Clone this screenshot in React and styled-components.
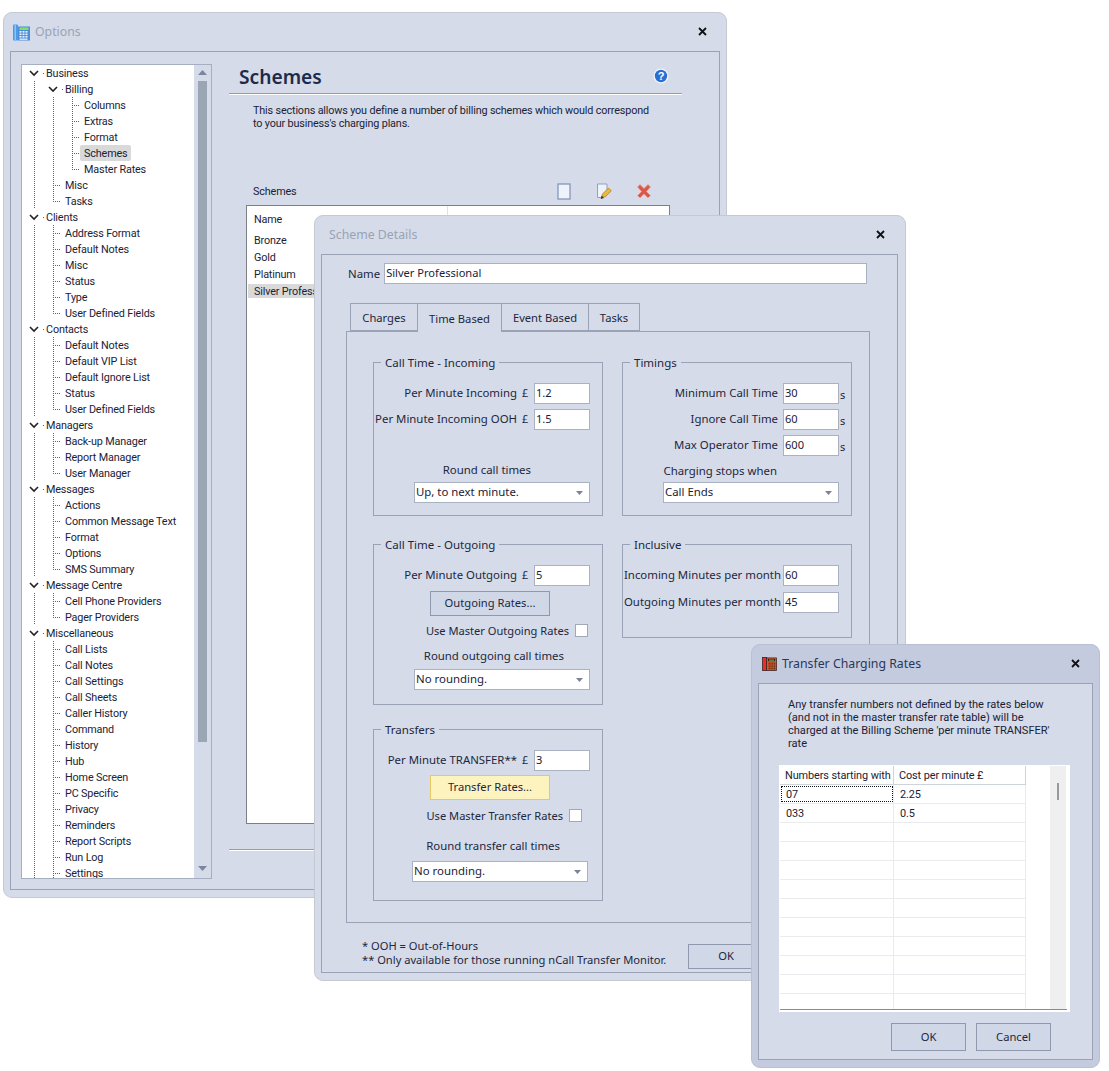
import React from "react";
import styled, { createGlobalStyle } from "styled-components";

const UI = `"Noto Sans", "Open Sans", "Liberation Sans", sans-serif`;
const TREEFONT = `Roboto, "Liberation Sans", sans-serif`;
const INK = "#1d2740";
const FACE = "#d5dbe8";
const LINE = "#9aa3b5";

const Global = createGlobalStyle`
  html, body { margin: 0; padding: 0; background: #fff; }
  body { font-family: ${UI}; color: ${INK}; width: 1109px; height: 1071px; overflow: hidden; }
`;

const Desktop = styled.div`
  position: relative;
  width: 1109px;
  height: 1071px;
  overflow: hidden;
`;

const Win = styled.section`
  position: absolute;
  left: ${(p) => p.$x}px;
  top: ${(p) => p.$y}px;
  width: ${(p) => p.$w}px;
  height: ${(p) => p.$h}px;
  box-sizing: border-box;
  display: flex;
  flex-direction: column;
  padding: 0 ${(p) => p.$padR ?? 6}px 7px 6px;
  background: ${(p) => (p.$active ? "#c4cbdf" : FACE)};
  border: 1px solid ${(p) => (p.$active ? "#b9c0d4" : "#c5c9d2")};
  border-radius: 9px;
`;

const TitleBar = styled.header`
  flex: none;
  box-sizing: border-box;
  height: 38px;
  display: flex;
  align-items: center;
  gap: 5px;
  padding: 0 13px 2px ${(p) => p.$pl}px;
`;

const Title = styled.h1`
  margin: 0;
  font-size: 12.3px;
  font-weight: 400;
  color: ${(p) => (p.$active ? "#2b3759" : "#9aa3b5")};
`;

const TitleIcon = styled.svg`
  flex: none;
  margin-top: 2px;
`;

const CloseBtn = styled.svg`
  width: 9px;
  height: 9px;
  margin-left: auto;
`;

const Frame = styled.div`
  flex: 1;
  min-height: 0;
  box-sizing: border-box;
  border: 1px solid ${LINE};
  background: ${FACE};
`;

const OptionsBody = styled(Frame)`
  display: flex;
  padding: 12px 0 10px 10px;
`;

/* Tree */
const Tree = styled.nav`
  flex: none;
  box-sizing: border-box;
  width: 191px;
  height: 815px;
  display: flex;
  border: 1px solid #a6afc1;
  font-family: ${TREEFONT};
  font-size: 10.8px;
  letter-spacing: -0.15px;
  overflow: hidden;
`;

const TreeList = styled.div`
  flex: none;
  width: 172px;
  height: 100%;
  background: #fff;
  overflow: hidden;
`;

const TreeRow = styled.div`
  display: flex;
  align-items: center;
  height: 16px;
  padding-left: 12px;
  white-space: nowrap;
  color: #1a2236;
`;

const DOTS_V = "repeating-linear-gradient(to bottom, #5b5f68 0 1px, transparent 1px 2px)";
const DOTS_H = "repeating-linear-gradient(to right, #5b5f68 0 1px, transparent 1px 2px)";

const Guide = styled.span`
  flex: none;
  width: ${(p) => p.$w}px;
  height: 16px;
  background-image: ${DOTS_V}${(p) => (p.$tick ? `, ${DOTS_H}` : "")};
  background-repeat: no-repeat;
  background-position: 0 0${(p) => (p.$tick ? ", 0 8px" : "")};
  background-size: 1px ${(p) => (p.$last ? "9px" : "16px")}${(p) => (p.$tick ? ", 8px 1px" : "")};
`;

const Expander = styled.span`
  flex: none;
  width: 12px;
  display: flex;
  align-items: center;
  height: 16px;
`;

const Chevron = styled.svg`
  flex: none;
  width: 10px;
  height: 7px;
  margin-left: -5px;
`;

const Dot = styled.span`
  flex: none;
  width: 1px;
  height: 1px;
  margin-left: 4px;
  background: #5b5f68;
`;

const TreeLabel = styled.span`
  box-sizing: border-box;
  height: 16px;
  line-height: 17px;
  padding: 0 4px;
  margin-left: -4px;
  border-radius: 2px;
  background: ${(p) => (p.$selected ? "#d9d9d9" : "transparent")};
`;

const VScroll = styled.div`
  flex: none;
  width: 17px;
  display: flex;
  flex-direction: column;
  align-items: center;
  background: ${FACE};
`;

const ScrollArrow = styled.svg`
  flex: none;
  width: 9px;
  height: 5px;
  margin-top: ${(p) => p.$mt}px;
`;

const ScrollThumb = styled.div`
  flex: none;
  width: 9px;
  height: 661px;
  margin-top: 6px;
  background: #9ba6b5;
`;

/* Right pane */
const Pane = styled.div`
  flex: none;
  width: 453px;
  margin-left: 17px;
  display: flex;
  flex-direction: column;
`;

const HeadingRow = styled.div`
  box-sizing: border-box;
  height: 29px;
  display: flex;
  align-items: center;
  justify-content: space-between;
  padding: 0 13px 4px 10px;
`;

const Heading = styled.h2`
  margin: 0;
  font-size: 19.2px;
  line-height: 26px;
  font-weight: 600;
  color: #1d2b4a;
`;

const HelpGlyph = styled.svg`
  flex: none;
  margin-top: -2px;
`;

const Rule = styled.hr`
  flex: none;
  width: 100%;
  height: 0;
  margin: ${(p) => p.$mt ?? 0}px 0 0;
  border: 0;
  border-top: 1px solid #9c9c9c;
  border-bottom: 1px solid #fff;
`;

const Intro = styled.p`
  margin: 9px 0 0 24px;
  width: 405px;
  font-family: ${TREEFONT};
  font-size: 10.8px;
  letter-spacing: -0.15px;
  line-height: 13px;
  color: #1a2236;
`;

const ListToolbar = styled.div`
  margin: 51px 0 0 24px;
  width: 399px;
  height: 20px;
  display: flex;
  align-items: center;
  font-family: ${TREEFONT};
  font-size: 10.8px;
  letter-spacing: -0.15px;
  color: #1a2236;
`;

const ToolIcons = styled.div`
  margin-left: auto;
  display: flex;
  gap: 24px;
`;

const ToolIcon = styled.svg`
  width: 16px;
  height: 17px;
`;

const SchemeList = styled.div`
  margin: 4px 0 0 17px;
  box-sizing: border-box;
  width: 424px;
  height: 619px;
  border: 1px solid #7c7f86;
  background: #fff;
  font-family: ${TREEFONT};
  font-size: 10.8px;
  letter-spacing: -0.15px;
  color: #1a2236;
`;

const ListHead = styled.div`
  height: 27px;
  display: flex;
`;

const ListHeadCell = styled.div`
  width: 201px;
  box-sizing: border-box;
  padding: 7px 0 0 7px;
  border-right: 1px solid #dfe1e6;
`;

const ListItem = styled.div`
  height: 14px;
  line-height: 16px;
  margin: 0 1px 3px;
  padding-left: 6px;
  background: ${(p) => (p.$selected ? "#d9d9d9" : "transparent")};
`;

/* Scheme details */
const NameRow = styled.div`
  display: flex;
  align-items: center;
  gap: 4px;
  margin: 8px 0 0 26px;
  padding-bottom: 0;
  font-size: 11.4px;
  line-height: 19px;
`;

const TextBox = styled.div`
  flex: none;
  box-sizing: border-box;
  width: ${(p) => p.$w ?? 56}px;
  height: 21px;
  padding-left: 1px;
  line-height: 17px;
  border: 1px solid #a9b1c2;
  background: #fff;
  font-size: 11.1px;
  color: #1a2236;
  white-space: nowrap;
`;

const TabStrip = styled.div`
  display: flex;
  margin: 19px 0 0 29px;
  position: relative;
  z-index: 1;
  height: 29px;
`;

const Tab = styled.div`
  box-sizing: border-box;
  width: ${(p) => p.$w}px;
  margin-left: -1px;
  height: ${(p) => (p.$active ? 29 : 28)}px;
  border: 1px solid ${LINE};
  border-bottom: ${(p) => (p.$active ? "0" : `1px solid ${LINE}`)};
  background: ${FACE};
  text-align: center;
  font-size: 11.2px;
  line-height: ${(p) => (p.$active ? 30 : 27)}px;
  color: ${INK};
`;

const TabPanel = styled.div`
  box-sizing: border-box;
  width: 524px;
  height: 592px;
  margin: -1px 0 0 24px;
  padding: 30px 0 0 26px;
  border: 1px solid ${LINE};
  display: flex;
  gap: 19px;
  align-items: flex-start;
`;

const Column = styled.div`
  display: flex;
  flex-direction: column;
  width: 230px;
`;

const Group = styled.fieldset`
  position: relative;
  box-sizing: border-box;
  width: 230px;
  height: ${(p) => p.$h}px;
  min-inline-size: 0;
  margin: ${(p) => p.$mt ?? 0}px 0 0;
  padding: 20px 12px 0 0;
  border: 1px solid ${LINE};
  display: flex;
  flex-direction: column;
  align-items: flex-end;
  font-size: 11.4px;
`;

const GroupTitle = styled.span`
  position: absolute;
  left: 7px;
  top: -8px;
  height: 16px;
  line-height: 16px;
  padding: 0 4px;
  font-size: 11.5px;
  background: ${FACE};
  color: ${INK};
`;

const FieldRow = styled.div`
  flex: none;
  display: flex;
  align-items: center;
  justify-content: flex-end;
  height: 21px;
  margin: ${(p) => p.$mt ?? 0}px ${(p) => p.$mr ?? 0}px 0 0;
  white-space: nowrap;
`;

const FieldLabel = styled.span`
  margin-right: ${(p) => p.$gap ?? 5}px;
  margin-top: -2px;
`;

const Currency = styled.span`
  margin-right: 5px;
  width: 7px;
  font-size: 11px;
  margin-top: -2px;
`;

const Unit = styled.span`
  width: 0;
  margin-left: 1px;
  margin-right: -1px;
  font-size: 11px;
  line-height: 21px;
  padding-top: 2px;
`;

const Caption = styled.div`
  flex: none;
  height: 16px;
  line-height: 16px;
  margin: ${(p) => p.$mt}px ${(p) => p.$mr}px 0 0;
  white-space: nowrap;
`;

const Select = styled.div`
  flex: none;
  box-sizing: border-box;
  width: 176px;
  height: 21px;
  margin: ${(p) => p.$mt}px ${(p) => p.$mr ?? 0}px 0 0;
  padding: 0 6px 2px 1px;
  display: flex;
  align-items: center;
  justify-content: space-between;
  border: 1px solid #a9b1c2;
  background: #fff;
  color: #1a2236;
`;

const SelectArrow = styled.svg`
  width: 7px;
  height: 4px;
  margin-top: 2px;
`;

const Button = styled.button`
  flex: none;
  box-sizing: border-box;
  width: ${(p) => p.$w}px;
  height: ${(p) => p.$h}px;
  margin: ${(p) => p.$mt ?? 0}px ${(p) => p.$mr ?? 0}px 0 0;
  padding: 0 0 2px;
  border: 1px solid ${(p) => (p.$hot ? "#e7c766" : "#8f98ac")};
  background: ${(p) => (p.$hot ? "#fdf3bf" : "#d0d7e6")};
  font: 400 11.2px ${UI};
  color: ${INK};
`;

const CheckRow = styled.div`
  flex: none;
  display: flex;
  align-items: center;
  gap: 6px;
  height: 13px;
  margin: ${(p) => p.$mt}px ${(p) => p.$mr}px 0 0;
  font-size: 11.1px;
  line-height: 11px;
  white-space: nowrap;
`;

const CheckBox = styled.span`
  flex: none;
  box-sizing: border-box;
  width: 13px;
  height: 13px;
  border: 1px solid #a0a8ba;
  background: #fff;
`;

const Footer = styled.div`
  display: flex;
  align-items: flex-start;
  margin: 16px 0 0 40px;
`;

const Notes = styled.div`
  width: 326px;
  font-size: 11.15px;
  line-height: 14px;
  white-space: nowrap;
`;

const FooterBtn = styled(Button)`
  margin-top: 5px;
`;

/* Transfer rates */
const TransferBody = styled(Frame)`
  padding: 14px 0 0 20px;
  display: flex;
  flex-direction: column;
`;

const TransferIntro = styled.p`
  margin: 0 0 0 9px;
  font-family: ${TREEFONT};
  font-size: 11.05px;
  line-height: 13px;
  white-space: pre-line;
  color: #1a2236;
`;

const GridBox = styled.div`
  margin-top: 15px;
  box-sizing: border-box;
  width: 291px;
  height: 247px;
  padding: 1px 0 0 1px;
  background: #fff;
  display: flex;
`;

const GridInner = styled.div`
  flex: none;
  width: 287px;
  height: 243px;
  display: flex;
  border-bottom: 1px solid #888c94;
  box-sizing: content-box;
`;

const GridTable = styled.div`
  flex: none;
  width: 246px;
  height: 100%;
  overflow: hidden;
  font-family: ${TREEFONT};
  font-size: 10.9px;
  letter-spacing: -0.1px;
  color: #1a2236;
`;

const GridRow = styled.div`
  display: grid;
  grid-template-columns: 114px 132px;
  height: 19px;
  box-sizing: border-box;
  border-bottom: 1px solid ${(p) => (p.$head ? "#cfd3dc" : "#e9ebef")};
`;

const GridCell = styled.div`
  box-sizing: border-box;
  padding: 1px 0 0 ${(p) => (p.$head ? 5 : 6)}px;
  line-height: 17px;
  border-right: 1px solid ${(p) => (p.$head ? "#cfd3dc" : "#e9ebef")};
  white-space: nowrap;
  outline: ${(p) => (p.$focus ? "1px dotted #111" : "none")};
  outline-offset: -2px;
`;

const GridTrack = styled.div`
  flex: none;
  width: 16px;
  margin-left: 24px;
  background: #efefef;
`;

const GridThumb = styled.div`
  width: 2px;
  height: 17px;
  margin: 17px 0 0 7px;
  background: #999;
`;

const DialogButtons = styled.div`
  display: flex;
  gap: 10px;
  margin: 11px 0 0 112px;
`;

const CloseIcon = () => (
  <CloseBtn viewBox="0 0 9 9">
    <path d="M1 1l7 7M8 1l-7 7" stroke="#111" strokeWidth="1.8" fill="none" />
  </CloseBtn>
);

const DropArrow = () => (
  <SelectArrow viewBox="0 0 7 4">
    <path d="M0 0h7L3.5 4z" fill="#7b8394" />
  </SelectArrow>
);

const PhoneBlue = () => (
  <TitleIcon width="17" height="17" viewBox="0 0 17 17">
    <rect x="0" y="0.5" width="5" height="16" rx="1" fill="#4d9be6" />
    <rect x="1.5" y="1" width="1.5" height="15" fill="#8cc4f4" />
    <rect x="5" y="2.5" width="12" height="14" fill="#4a8ede" />
    <rect x="6.5" y="3.5" width="9" height="2.5" fill="#86e060" />
    {[7, 9.5, 12].map((y) =>
      [6.5, 9.5, 12.5].map((x) => <rect key={`${x}-${y}`} x={x} y={y} width="2" height="1.6" fill="#eef5ff" />)
    )}
    <rect x="6.5" y="14.5" width="8" height="1.4" fill="#dbe9fb" />
  </TitleIcon>
);

const PhoneRed = () => (
  <TitleIcon width="15" height="14" viewBox="0 0 16 15">
    <rect x="0.5" y="0.5" width="4.5" height="14" fill="#f02c28" stroke="#30211f" strokeWidth="0.8" />
    <rect x="5" y="1" width="10.5" height="13.5" fill="#ee5a2a" stroke="#30211f" strokeWidth="0.8" />
    <rect x="6.5" y="2" width="7.5" height="2.5" fill="#1a1a1a" />
    <rect x="7.5" y="2.8" width="5.5" height="1" fill="#7be060" />
    {[6, 8, 10, 12].map((y) =>
      [7, 9, 11, 13].map((x) => <rect key={`${x}-${y}`} x={x} y={y} width="1.2" height="1.2" fill="#2b1a16" />)
    )}
  </TitleIcon>
);

const HelpIcon = () => (
  <HelpGlyph width="16" height="16" viewBox="0 0 16 16">
    <circle cx="8" cy="8" r="7.5" fill="#f3f6fc" />
    <circle cx="8" cy="8" r="6.2" fill="#2b6fd2" />
    <text x="8" y="12" textAnchor="middle" fontSize="11" fontWeight="700" fontFamily="Liberation Sans, sans-serif" fill="#fff">?</text>
  </HelpGlyph>
);

const NewIcon = () => (
  <ToolIcon viewBox="0 0 16 17">
    <rect x="2" y="1" width="12" height="15" fill="#eef2fb" stroke="#7d90bb" strokeWidth="1.2" />
  </ToolIcon>
);

const EditIcon = () => (
  <ToolIcon viewBox="0 0 16 17">
    <path d="M1.500 1h9.500v8l-5.500 5.500H1.500z" fill="#eef2fb" stroke="#8fa0c4" />
    <path d="M5.500 14l1-3L12.500 5l2.800 2.800-6 6z" fill="#eeb93a" stroke="#a8781c" strokeWidth="0.7" />
    <path d="M4.700 16l1-3.200 2.300 2.300z" fill="#333" />
  </ToolIcon>
);

const DeleteIcon = () => (
  <ToolIcon viewBox="0 0 16 17">
    <path d="M1.500 4l2.500-2.500L8 5.500l4-4L14.500 4l-4 4.500 4 4-2.500 2.500-4-4-4 4-2.500-2.500 4-4z" fill="#d9584a" stroke="#e9a297" strokeWidth="0.8" />
  </ToolIcon>
);

const TREE = [
  [0, "Business"], [1, "Billing", "x"], [2, "Columns"], [2, "Extras"], [2, "Format"], [2, "Schemes", "s"], [2, "Master Rates", "l"],
  [1, "Misc"], [1, "Tasks", "l"],
  [0, "Clients"], [1, "Address Format"], [1, "Default Notes"], [1, "Misc"], [1, "Status"], [1, "Type"], [1, "User Defined Fields", "l"],
  [0, "Contacts"], [1, "Default Notes"], [1, "Default VIP List"], [1, "Default Ignore List"], [1, "Status"], [1, "User Defined Fields", "l"],
  [0, "Managers"], [1, "Back-up Manager"], [1, "Report Manager"], [1, "User Manager", "l"],
  [0, "Messages"], [1, "Actions"], [1, "Common Message Text"], [1, "Format"], [1, "Options"], [1, "SMS Summary", "l"],
  [0, "Message Centre"], [1, "Cell Phone Providers"], [1, "Pager Providers", "l"],
  [0, "Miscellaneous"], [1, "Call Lists"], [1, "Call Notes"], [1, "Call Settings"], [1, "Call Sheets"], [1, "Caller History"], [1, "Command"],
  [1, "History"], [1, "Hub"], [1, "Home Screen"], [1, "PC Specific"], [1, "Privacy"], [1, "Reminders"], [1, "Report Scripts"], [1, "Run Log"], [1, "Settings"],
];

const ExpanderCell = () => (
  <Expander>
    <Chevron viewBox="0 0 10 7">
      <path d="M1 1l4 4 4-4" stroke="#222" strokeWidth="1.6" fill="none" />
    </Chevron>
    <Dot />
  </Expander>
);

const TreeNode = ({ level, label, flag }) => {
  const expandable = level === 0 || flag === "x";
  return (
    <TreeRow>
      {level >= 1 && <Guide $w={19} />}
      {level === 2 && <Guide $w={19} />}
      {expandable ? <ExpanderCell /> : <Guide $w={12} $tick $last={flag === "l"} />}
      <TreeLabel $selected={flag === "s"}>{label}</TreeLabel>
    </TreeRow>
  );
};

const GRID_ROWS = [["07", "2.25"], ["033", "0.5"], ...Array.from({ length: 11 }, () => ["", ""])];

export default function App() {
  return (
    <Desktop>
      <Global />
      <Win $x={3} $y={12} $w={724} $h={886}>
        <TitleBar $pl={3}>
          <PhoneBlue />
          <Title>Options</Title>
          <CloseIcon />
        </TitleBar>
        <OptionsBody>
          <Tree>
            <TreeList>
              {TREE.map(([level, label, flag], i) => (
                <TreeNode key={i} level={level} label={label} flag={flag} />
              ))}
            </TreeList>
            <VScroll>
              <ScrollArrow $mt={5} viewBox="0 0 9 5"><path d="M0 5h9L4.500 0z" fill="#7d879b" /></ScrollArrow>
              <ScrollThumb />
              <ScrollArrow $mt={124} viewBox="0 0 9 5"><path d="M0 0h9L4.500 5z" fill="#7d879b" /></ScrollArrow>
            </VScroll>
          </Tree>
          <Pane>
            <HeadingRow>
              <Heading>Schemes</Heading>
              <HelpIcon />
            </HeadingRow>
            <Rule />
            <Intro>
              This sections allows you define a number of billing schemes which would correspond to your business's charging plans.
            </Intro>
            <ListToolbar>
              Schemes
              <ToolIcons>
                <NewIcon />
                <EditIcon />
                <DeleteIcon />
              </ToolIcons>
            </ListToolbar>
            <SchemeList>
              <ListHead><ListHeadCell>Name</ListHeadCell></ListHead>
              <ListItem>Bronze</ListItem>
              <ListItem>Gold</ListItem>
              <ListItem>Platinum</ListItem>
              <ListItem $selected>Silver Professional</ListItem>
            </SchemeList>
            <Rule $mt={25} />
          </Pane>
        </OptionsBody>
      </Win>

      <Win $x={314} $y={215} $w={592} $h={766} $padR={7}>
        <TitleBar $pl={8}>
          <Title>Scheme Details</Title>
          <CloseIcon />
        </TitleBar>
        <Frame>
          <NameRow>
            Name
            <TextBox $w={483}>Silver Professional</TextBox>
          </NameRow>
          <TabStrip>
            <Tab $w={68}>Charges</Tab>
            <Tab $w={85} $active>Time Based</Tab>
            <Tab $w={88}>Event Based</Tab>
            <Tab $w={52}>Tasks</Tab>
          </TabStrip>
          <TabPanel>
            <Column>
              <Group $h={154}>
                <GroupTitle>Call Time - Incoming</GroupTitle>
                <FieldRow>
                  <FieldLabel>Per Minute Incoming</FieldLabel><Currency>£</Currency><TextBox>1.2</TextBox>
                </FieldRow>
                <FieldRow $mt={5}>
                  <FieldLabel>Per Minute Incoming OOH</FieldLabel><Currency>£</Currency><TextBox>1.5</TextBox>
                </FieldRow>
                <Caption $mt={32} $mr={59}>Round call times</Caption>
                <Select $mt={4}>Up, to next minute.<DropArrow /></Select>
              </Group>
              <Group $h={161} $mt={28}>
                <GroupTitle>Call Time - Outgoing</GroupTitle>
                <FieldRow>
                  <FieldLabel>Per Minute Outgoing</FieldLabel><Currency>£</Currency><TextBox>5</TextBox>
                </FieldRow>
                <Button $w={120} $h={25} $mt={5} $mr={40}>Outgoing Rates...</Button>
                <CheckRow $mt={8} $mr={2}>Use Master Outgoing Rates<CheckBox /></CheckRow>
                <Caption $mt={11} $mr={26}>Round outgoing call times</Caption>
                <Select $mt={5}>No rounding.<DropArrow /></Select>
              </Group>
              <Group $h={172} $mt={24}>
                <GroupTitle>Transfers</GroupTitle>
                <FieldRow>
                  <FieldLabel>Per Minute TRANSFER**</FieldLabel><Currency>£</Currency><TextBox>3</TextBox>
                </FieldRow>
                <Button $hot $w={120} $h={25} $mt={4} $mr={40}>Transfer Rates...</Button>
                <CheckRow $mt={9} $mr={8}>Use Master Transfer Rates<CheckBox /></CheckRow>
                <Caption $mt={16} $mr={30}>Round transfer call times</Caption>
                <Select $mt={7} $mr={2}>No rounding.<DropArrow /></Select>
              </Group>
            </Column>
            <Column>
              <Group $h={154}>
                <GroupTitle>Timings</GroupTitle>
                <FieldRow>
                  <FieldLabel>Minimum Call Time</FieldLabel><TextBox>30</TextBox><Unit>s</Unit>
                </FieldRow>
                <FieldRow $mt={5}>
                  <FieldLabel>Ignore Call Time</FieldLabel><TextBox>60</TextBox><Unit>s</Unit>
                </FieldRow>
                <FieldRow $mt={5}>
                  <FieldLabel>Max Operator Time</FieldLabel><TextBox>600</TextBox><Unit>s</Unit>
                </FieldRow>
                <Caption $mt={7} $mr={62}>Charging stops when</Caption>
                <Select $mt={3}>Call Ends<DropArrow /></Select>
              </Group>
              <Group $h={94} $mt={28}>
                <GroupTitle>Inclusive</GroupTitle>
                <FieldRow>
                  <FieldLabel $gap={2}>Incoming Minutes per month</FieldLabel><TextBox>60</TextBox>
                </FieldRow>
                <FieldRow $mt={6}>
                  <FieldLabel $gap={2}>Outgoing Minutes per month</FieldLabel><TextBox>45</TextBox>
                </FieldRow>
              </Group>
            </Column>
          </TabPanel>
          <Footer>
            <Notes>
              * OOH = Out-of-Hours
              <br />
              ** Only available for those running nCall Transfer Monitor.
            </Notes>
            <FooterBtn $w={76} $h={25}>OK</FooterBtn>
          </Footer>
        </Frame>
      </Win>

      <Win $x={751} $y={644} $w={349} $h={424} $active>
        <TitleBar $pl={4}>
          <PhoneRed />
          <Title $active>Transfer Charging Rates</Title>
          <CloseIcon />
        </TitleBar>
        <TransferBody>
          <TransferIntro>{`Any transfer numbers not defined by the rates below
(and not in the master transfer rate table) will be
charged at the Billing Scheme 'per minute TRANSFER'
rate`}</TransferIntro>
          <GridBox>
            <GridInner>
              <GridTable>
                <GridRow $head>
                  <GridCell $head>Numbers starting with</GridCell>
                  <GridCell $head>Cost per minute £</GridCell>
                </GridRow>
                {GRID_ROWS.map(([a, b], i) => (
                  <GridRow key={i}>
                    <GridCell $focus={i === 0}>{a}</GridCell>
                    <GridCell>{b}</GridCell>
                  </GridRow>
                ))}
              </GridTable>
              <GridTrack><GridThumb /></GridTrack>
            </GridInner>
          </GridBox>
          <DialogButtons>
            <Button $w={75} $h={28}>OK</Button>
            <Button $w={75} $h={28}>Cancel</Button>
          </DialogButtons>
        </TransferBody>
      </Win>
    </Desktop>
  );
}
